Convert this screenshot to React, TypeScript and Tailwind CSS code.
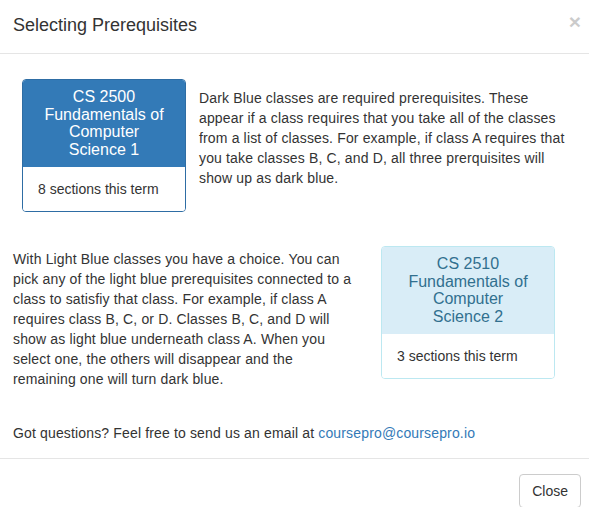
import React from "react";

export default function App() {
  return (
    <div
      className="w-[589px] h-[507px] overflow-hidden bg-white text-[#333] text-[14px] leading-[20px]"
      style={{ fontFamily: '"Liberation Sans", Arial, sans-serif' }}
    >
      {/* Header */}
      <div className="h-[54px] border-b border-[#e5e5e5] pl-[13px] pr-[8px] flex items-start justify-between">
        <h4 className="text-[18px] leading-[26px] mt-[12px]">Selecting Prerequisites</h4>
        <button className="text-[21px] font-bold leading-[21px] text-black opacity-20 mt-[11px] mr-[0px]">×</button>
      </div>

      {/* Body */}
      <div className="pl-[13px] pr-[8px] pt-[25px]">
        <div className="flex items-start">
          <div className="ml-[9px] w-[164px] shrink-0 rounded-[4px] border border-[#2e6da4] overflow-hidden">
            <div className="bg-[#337ab7] text-white text-center text-[16px] leading-[17.5px] px-[20px] pt-[8px] pb-[9px]">
              CS 2500
              <br />
              Fundamentals of Computer Science 1
            </div>
            <div className="bg-white px-[15px] py-[12px] text-[14px] leading-[20px]">8 sections this term</div>
          </div>
          <p className="ml-[13px] mt-[9px] w-[366px] tracking-[0.15px]">
            Dark Blue classes are required prerequisites. These appear if a class requires that you take all of the
            classes from a list of classes. For example, if class A requires that you take classes B, C, and D, all
            three prerquisites will show up as dark blue.
          </p>
        </div>

        <div className="flex items-start mt-[34px]">
          <p className="w-[345px] mt-[3px] tracking-[0.15px]">
            With Light Blue classes you have a choice. You can pick any of the light blue prerequisites connected to a
            class to satisfiy that class. For example, if class A requires class B, C, or D. Classes B, C, and D will
            show as light blue underneath class A. When you select one, the others will disappear and the remaining
            one will turn dark blue.
          </p>
          <div className="ml-[23px] w-[174px] shrink-0 rounded-[4px] border border-[#bce8f1] overflow-hidden">
            <div className="bg-[#d9edf7] text-[#31708f] text-center text-[16px] leading-[17.5px] px-[25px] pt-[8px] pb-[9px]">
              CS 2510
              <br />
              Fundamentals of Computer Science 2
            </div>
            <div className="bg-white px-[15px] py-[12px] text-[14px] leading-[20px]">3 sections this term</div>
          </div>
        </div>

        <p className="mt-[34px] pb-[15px] tracking-[0.15px]">
          Got questions? Feel free to send us an email at{" "}
          <a className="text-[#337ab7]">coursepro@coursepro.io</a>
        </p>
      </div>

      {/* Footer */}
      <div className="border-t border-[#e5e5e5] pt-[15px] pl-[13px] pr-[8px] flex justify-end">
        <button className="border border-[#ccc] rounded-[4px] px-[12px] py-[6px] text-[14px] leading-[20px] text-[#333] bg-white">
          Close
        </button>
      </div>
    </div>
  );
}
